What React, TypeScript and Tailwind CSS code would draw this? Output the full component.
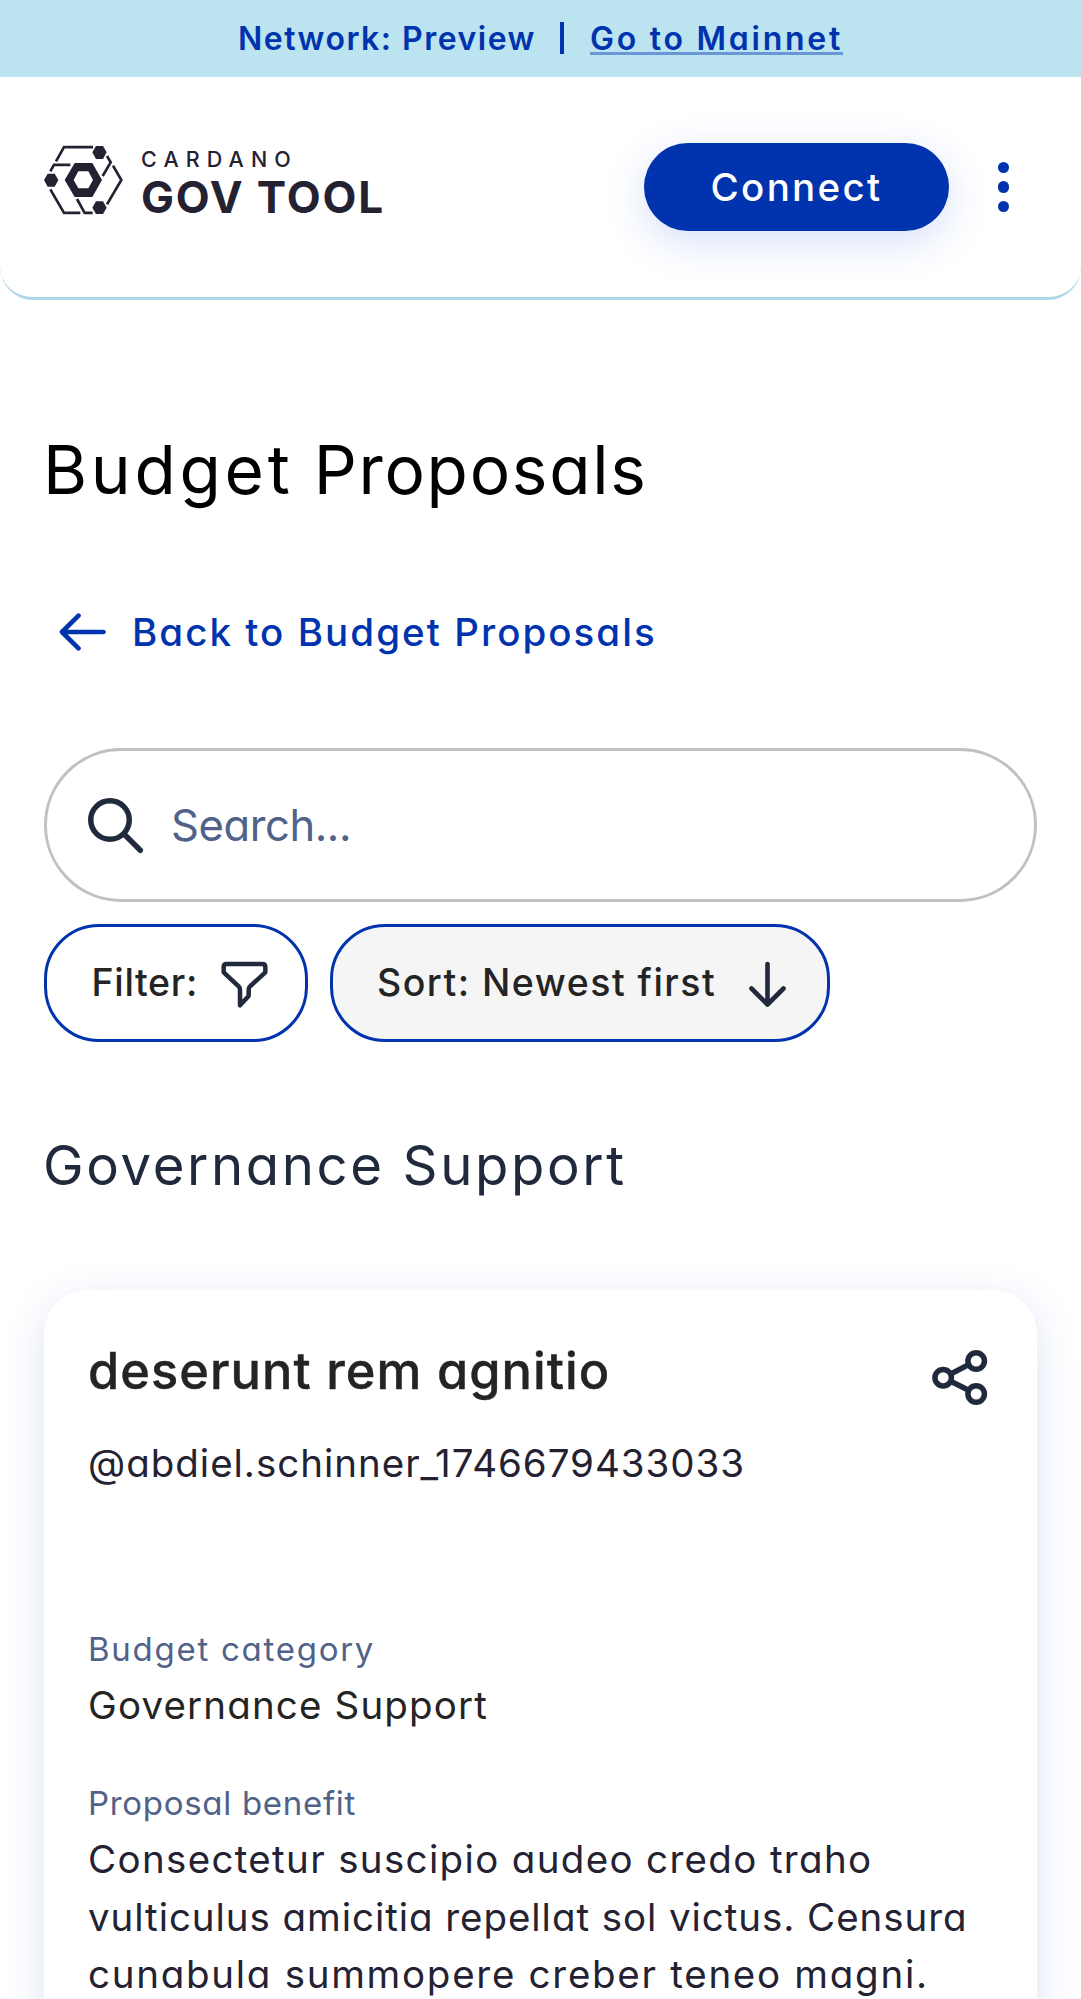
import type { ReactNode } from "react";

function LogoMark() {
  return (
    <svg className="mt-[2px] h-[70px] w-[79px]" viewBox="42 45 237 210" fill="none" stroke="#242232" strokeWidth="8">
      <path d="M78 94 L102 51.500 H189" />
      <path d="M61 124 L72 104.500 H121" />
      <path d="M61 178 L102 248.500 H151" />
      <path d="M141 207 L164 248.500 H188" />
      <path d="M231 223 L274 150 L249 107" />
      <path d="M218 138 L242 97 L231 78" />
      <path d="M134 99 H187 L216 150 L187 201 H134 L104 150 Z M145 124 L131 150 L145 175 H175 L189 150 L175 124 Z" fill="#242232" fillRule="evenodd" stroke="none" />
      <path d="M198 48 H219 L230 67 L219 87 H198 L187 67 Z" fill="#242232" stroke="none" />
      <path d="M53 131 H74 L85 150 L74 170 H53 L42 150 Z" fill="#242232" stroke="none" />
      <path d="M198 214 H219 L230 233 L219 252 H198 L187 233 Z" fill="#242232" stroke="none" />
    </svg>
  );
}

function Banner() {
  return (
    <div className="flex h-[77px] justify-center bg-[#bbe3f0] text-[32px] leading-[77px] font-semibold whitespace-nowrap text-[#0033ad]">
      <span className="w-[322px] tracking-[1.49px]">Network: Preview</span>
      <span className="mt-[22px] h-8 w-1 bg-[#0033ad]" />
      <span className="ml-[26px] flex h-[55px] w-[253px] border-b-[3px] border-[#6b96d6] tracking-[2.75px]">
        Go to Mainnet
      </span>
    </div>
  );
}

function Header() {
  return (
    <header className="flex h-[223px] items-start rounded-b-[33px] border-b-[3px] border-[#add8e6] pt-[66px] pr-[72px] pl-11">
      <LogoMark />
      <div className="ml-[18px] flex flex-col text-[#242232]">
        <span className="mt-[5px] text-[21.5px] leading-[22px] font-medium tracking-[7.1px]">CARDANO</span>
        <span className="mt-[5px] text-[44px] leading-[45px] font-bold tracking-[1.85px]">GOV TOOL</span>
      </div>
      <button className="ml-auto h-[88px] w-[305px] rounded-full bg-[#0033ad] text-[38.5px] leading-[89px] font-medium tracking-[2.3px] text-white shadow-[0_11px_41px_rgba(47,98,220,0.2)]">
        Connect
      </button>
      <div className="mt-[19px] ml-[49px] flex w-[11px] flex-col gap-2">
        <i className="size-[11.3px] rounded-full bg-[#0033ad]" />
        <i className="size-[11.3px] rounded-full bg-[#0033ad]" />
        <i className="size-[11.3px] rounded-full bg-[#0033ad]" />
      </div>
    </header>
  );
}

function Body({ children, className }: { children: ReactNode; className: string }) {
  return <span className={"block whitespace-nowrap text-[38.5px] leading-[57.75px] " + className}>{children}</span>;
}

function Card() {
  return (
    <article className="mt-[90px] h-[900px] rounded-[44px] bg-white pt-[51px] pr-[49px] pl-11 shadow-[0_11px_41px_rgba(60,90,210,0.17)]">
      <div className="flex">
        <h3 className="text-[50.5px] leading-[60px] font-medium tracking-[1.05px] text-[#242424] [-webkit-text-stroke:0.4px_#242424]">deserunt rem agnitio</h3>
        <svg className="mt-[8px] ml-auto size-[57px]" viewBox="693 267 171 171" fill="none" stroke="#212a3d" strokeWidth="16.500">
          <circle cx="729.500" cy="353" r="24.750" />
          <circle cx="828.500" cy="303" r="24.750" />
          <circle cx="828.500" cy="402" r="24.750" />
          <path d="M752 342 L806 314 M752 364 L806 391" />
        </svg>
      </div>
      <p className="mt-[28px] text-[38.5px] leading-[58px] tracking-[0.98px] whitespace-nowrap text-[#242232]">
        @abdiel.schinner_1746679433033
      </p>
      <p className="mt-[133px] text-[33px] leading-[48px] tracking-[1.73px] text-[#506288]">Budget category</p>
      <Body className="mt-[4px] tracking-[1.16px] text-[#242424]">Governance Support</Body>
      <p className="mt-[44px] text-[33px] leading-[48px] tracking-[0.7px] text-[#506288]">Proposal benefit</p>
      <p className="mt-[4px] text-[#242232]">
        <Body className="tracking-[1.34px]">Consectetur suscipio audeo credo traho</Body>
        <Body className="tracking-[0.94px]">vulticulus amicitia repellat sol victus. Censura</Body>
        <Body className="tracking-[1.72px]">cunabula summopere creber teneo magni.</Body>
      </p>
    </article>
  );
}

export default function App() {
  return (
    <div className="h-[1999px] w-[1081px] overflow-hidden bg-white font-['Inter',sans-serif] [font-feature-settings:'cv11'_1]">
      <Banner />
      <Header />
      <main className="px-11 pt-[129px]">
        <h1 className="-ml-px text-[67.5px] leading-[82px] text-black">
          <span className="tracking-[3.7px] [word-spacing:-2.5px]">Budget </span>
          <span className="tracking-[1.7px]">Proposals</span>
        </h1>
        <a className="mt-[91px] flex h-[60px] items-center pl-[15px] text-[#0033ad]">
          <svg className="h-[38px] w-[48px]" viewBox="0 0 48 38" fill="none" stroke="currentColor" strokeWidth="4.600" strokeLinecap="round" strokeLinejoin="round">
            <path d="M3 19 H44.500 M19.500 2.700 L3 19 L19.500 35.300" />
          </svg>
          <span className="ml-[25px] text-[38.5px] leading-[60px] font-medium tracking-[2.05px]">Back to Budget Proposals</span>
        </a>
        <div className="mt-[86px] flex h-[154px] items-center rounded-full border-[3px] border-[#c1c1c1] pl-[40px]">
          <svg className="size-[57px]" viewBox="0 0 57 57" fill="none" stroke="#212a3d" strokeWidth="5.500" strokeLinecap="round">
            <circle cx="23" cy="23" r="19.250" />
            <path d="M37.500 37.500 L53.300 53.300" />
          </svg>
          <span className="ml-[27px] text-[43.5px] leading-[60px] tracking-[-0.4px] text-[#506288]">Search...</span>
        </div>
        <div className="mt-[22px] flex h-[118px] gap-[22px] text-[37.5px] font-medium text-[#242424]">
          <button className="flex w-[264px] items-center rounded-[55px] border-[3px] border-[#0033ad] pl-[44.5px]">
            <span className="w-[129.5px] pt-px text-left tracking-[0.67px]">Filter:</span>
            <svg className="mt-[3px] h-[48px] w-[48px]" viewBox="574 692 144 144" fill="none" stroke="#212a3d" strokeWidth="13.500" strokeLinejoin="round">
              <path d="M591 701 H698 Q707 701 707 710 V726 L661 768 Q657 772 657 778 V797 L631 825 V778 Q631 772 627 768 L582 726 V710 Q582 701 591 701 Z" />
            </svg>
          </button>
          <button className="flex w-[500px] items-center rounded-[55px] border-[3px] border-[#0033ad] bg-[#f5f5f5] pl-[44px]">
            <span className="w-[371px] pt-px text-left tracking-[1.48px]">Sort: Newest first</span>
            <svg className="mt-[3px] h-[47px] w-[39px]" viewBox="0 0 39 47" fill="none" stroke="#212a3d" strokeWidth="4.600" strokeLinecap="round" strokeLinejoin="round">
              <path d="M19.500 3 V43.500 M3.500 27.500 L19.500 43.500 L35.500 27.500" />
            </svg>
          </button>
        </div>
        <h2 className="mt-[88px] -ml-px text-[54.5px] leading-[70px] tracking-[2.6px] text-[#212a3d]">Governance Support</h2>
        <Card />
      </main>
    </div>
  );
}
